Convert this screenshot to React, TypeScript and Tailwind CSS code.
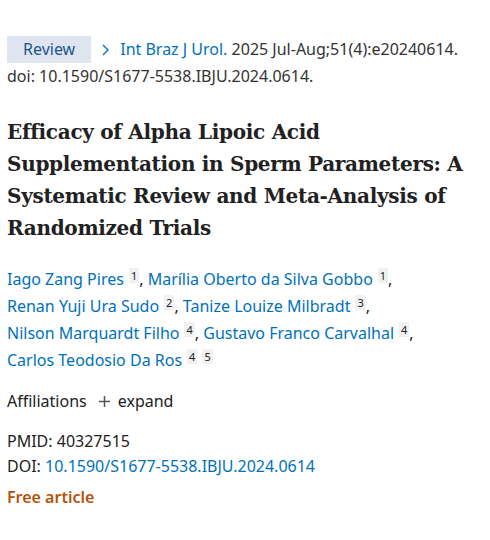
const authors = [
  { name: "Iago Zang Pires", refs: ["1"] },
  { name: "Marília Oberto da Silva Gobbo", refs: ["1"] },
  { name: "Renan Yuji Ura Sudo", refs: ["2"] },
  { name: "Tanize Louize Milbradt", refs: ["3"] },
  { name: "Nilson Marquardt Filho", refs: ["4"] },
  { name: "Gustavo Franco Carvalhal", refs: ["4"] },
  { name: "Carlos Teodosio Da Ros", refs: ["4", "5"] },
];

const lines = [
  [0, 1],
  [2, 3],
  [4, 5],
  [6],
];

const Ref = ({ n }: { n: string }) => (
  <span className="ml-[5px] inline-block align-[5px] bg-[#f1f1f1] px-[2px] text-[11px] leading-[15px] text-[#212121]">
    {n}
  </span>
);

export default function App() {
  return (
    <div className="min-h-[540px] w-[490px] bg-white px-[7px] pt-[36px] font-['Noto_Sans',sans-serif] text-[16px] text-[#212121]">
      <div className="leading-[27px]">
        <span className="mr-[11px] inline-block bg-[#dfe5ee] px-[16px] text-[#20558a]">Review</span>
        <a className="text-[#0071bc]">
          <svg className="mr-[11px] inline-block align-[-1px]" width="7" height="12" viewBox="0 0 7 12">
            <path d="M1 1 L6 6 L1 11" fill="none" stroke="#0071bc" strokeWidth="1.4" />
          </svg>
          Int Braz J Urol.
        </a>{" "}
        <span className="text-[#333]">2025 Jul-Aug;51(4):e20240614.</span>
        <div className="text-[#333]">doi: 10.1590/S1677-5538.IBJU.2024.0614.</div>
      </div>

      <h1 className="mt-[26px] font-['DejaVu_Serif',serif] text-[20px] font-bold leading-[32px] tracking-[-0.3px] text-[#212121]">
        Efficacy of Alpha Lipoic Acid Supplementation in Sperm Parameters: A Systematic Review and
        Meta-Analysis of Randomized Trials
      </h1>

      <div className="mt-[22px] leading-[27px]">
        {lines.map((line, i) => (
          <div key={i}>
            {line.map((idx) => {
              const a = authors[idx];
              return (
                <span key={idx}>
                  <a className="text-[#0071bc]">{a.name}</a>
                  {a.refs.map((r) => (
                    <Ref key={r} n={r} />
                  ))}
                  {idx < authors.length - 1 && <span>, </span>}
                </span>
              );
            })}
          </div>
        ))}
      </div>

      <div className="mt-[14px] flex items-center leading-[27px]">
        <span>Affiliations</span>
        <svg className="ml-[12px] mr-[8px]" width="11" height="11" viewBox="0 0 11 11">
          <path d="M5.5 0 V11 M0 5.5 H11" stroke="#555" strokeWidth="1.5" />
        </svg>
        <span>expand</span>
      </div>

      <div className="mt-[14px] leading-[25px]">
        <div>PMID: 40327515</div>
        <div>
          DOI: <a className="text-[#0071bc]">10.1590/S1677-5538.IBJU.2024.0614</a>
        </div>
      </div>
      <div className="mt-[6px] font-semibold leading-[25px] text-[#b5530d]">Free article</div>
    </div>
  );
}
